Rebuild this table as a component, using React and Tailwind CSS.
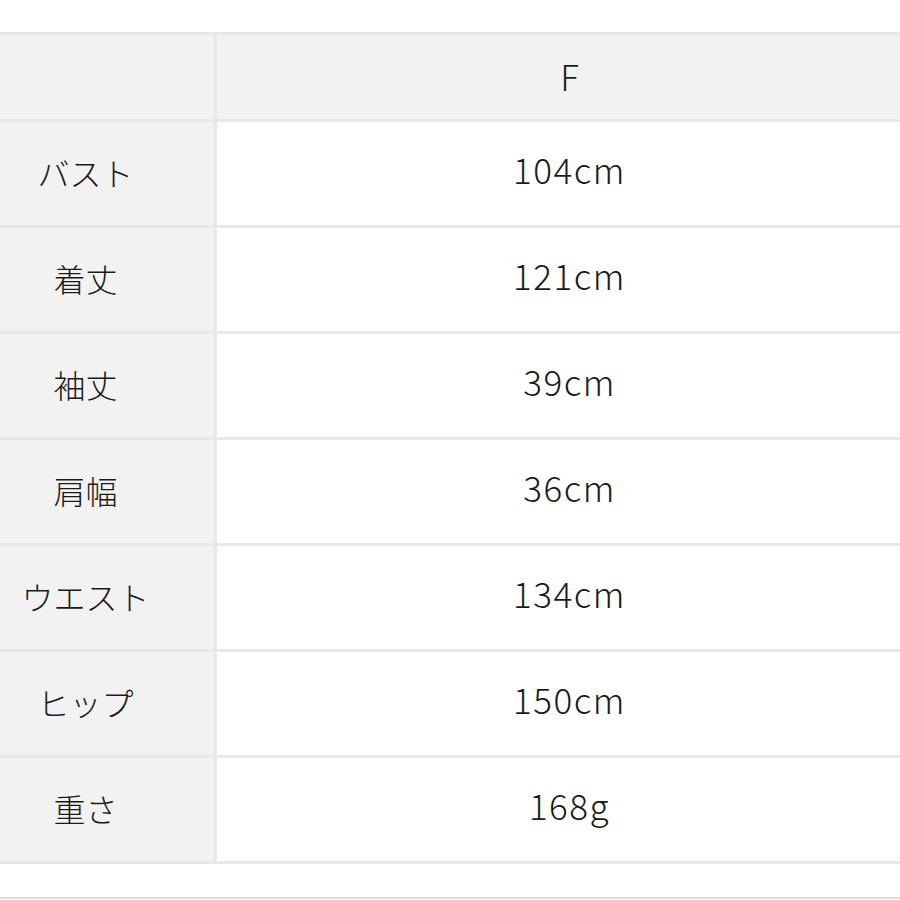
const rows = [
  ["バスト", "104cm"],
  ["着丈", "121cm"],
  ["袖丈", "39cm"],
  ["肩幅", "36cm"],
  ["ウエスト", "134cm"],
  ["ヒップ", "150cm"],
  ["重さ", "168g"],
];

const jp = { fontFamily: '"Noto Sans CJK JP", "Noto Sans", sans-serif' };
const latin = { fontFamily: '"Noto Sans CJK JP", "Liberation Sans", sans-serif' };

export default function App() {
  return (
    <div className="w-[900px] h-[900px] bg-white overflow-hidden text-[#1a1a1a]">
      <div className="pt-[32px]">
        <div className="border-t-[3px] border-[#e8e8e8]">
          <div className="flex h-[87px] border-b-[3px] border-[#e8e8e8] bg-[#f2f2f2]">
            <div className="w-[217px] border-r-[3px] border-[#e8e8e8]" />
            <div
              className="flex-1 flex items-center justify-center pl-[22px] pb-[2px] text-[35px] font-light"
              style={latin}
            >
              F
            </div>
          </div>
          {rows.map(([label, value]) => (
            <div key={label} className="flex h-[106px] border-b-[3px] border-[#e8e8e8]">
              <div
                className="w-[217px] bg-[#f2f2f2] border-r-[3px] border-[#e8e8e8] flex items-center justify-center pr-[43px] pb-[4px] text-[32px] font-light"
                style={jp}
              >
                {label}
              </div>
              <div
                className="flex-1 flex items-center justify-center pl-[22px] pb-[8px] text-[35px] font-light tracking-[1.5px]"
                style={latin}
              >
                {value}
              </div>
            </div>
          ))}
        </div>
        <div className="mt-[33px] border-t-[2px] border-[#dcdcdc]" />
      </div>
    </div>
  );
}
